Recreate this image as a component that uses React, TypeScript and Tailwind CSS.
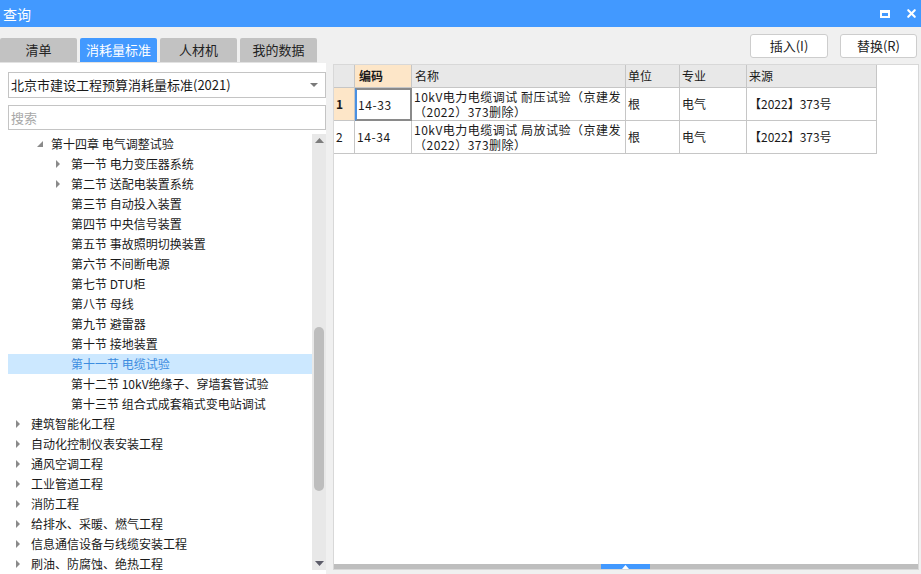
import { X } from "lucide-react";

const tabs = ["清单", "消耗量标准", "人材机", "我的数据"];

type Node = { label: string; level: number; arrow?: "open" | "closed"; active?: boolean };

const tree: Node[] = [
  { label: "第十四章 电气调整试验", level: 1, arrow: "open" },
  { label: "第一节 电力变压器系统", level: 2, arrow: "closed" },
  { label: "第二节 送配电装置系统", level: 2, arrow: "closed" },
  { label: "第三节 自动投入装置", level: 2 },
  { label: "第四节 中央信号装置", level: 2 },
  { label: "第五节 事故照明切换装置", level: 2 },
  { label: "第六节 不间断电源", level: 2 },
  { label: "第七节 DTU柜", level: 2 },
  { label: "第八节 母线", level: 2 },
  { label: "第九节 避雷器", level: 2 },
  { label: "第十节 接地装置", level: 2 },
  { label: "第十一节 电缆试验", level: 2, active: true },
  { label: "第十二节 10kV绝缘子、穿墙套管试验", level: 2 },
  { label: "第十三节 组合式成套箱式变电站调试", level: 2 },
  { label: "建筑智能化工程", level: 0, arrow: "closed" },
  { label: "自动化控制仪表安装工程", level: 0, arrow: "closed" },
  { label: "通风空调工程", level: 0, arrow: "closed" },
  { label: "工业管道工程", level: 0, arrow: "closed" },
  { label: "消防工程", level: 0, arrow: "closed" },
  { label: "给排水、采暖、燃气工程", level: 0, arrow: "closed" },
  { label: "信息通信设备与线缆安装工程", level: 0, arrow: "closed" },
  { label: "刷油、防腐蚀、绝热工程", level: 0, arrow: "closed" },
];

const rows = [
  { no: "1", code: "14-33", name: "10kV电力电缆调试 耐压试验（京建发（2022）373删除）", unit: "根", major: "电气", src: "【2022】373号" },
  { no: "2", code: "14-34", name: "10kV电力电缆调试 局放试验（京建发（2022）373删除）", unit: "根", major: "电气", src: "【2022】373号" },
];

const indent = ["pl-[4px]", "pl-[24px]", "pl-[44px]"];

function TreeArrow({ kind }: { kind?: "open" | "closed" }) {
  return (
    <span className="w-[19px] h-full flex items-center shrink-0">
      {kind === "closed" && (
        <svg width="10" height="10" viewBox="0 0 10 10" className="ml-[1px]">
          <path d="M3 1 L7 5 L3 9 Z" fill="#8a8a8a" />
        </svg>
      )}
      {kind === "open" && (
        <svg width="10" height="10" viewBox="0 0 10 10" className="ml-[3px]">
          <path d="M8 2 L8 8 L2 8 Z" fill="#8a8a8a" />
        </svg>
      )}
    </span>
  );
}

export default function App() {
  return (
    <div
      className="w-[921px] h-[574px] bg-[#f0f0f0] flex flex-col overflow-hidden text-[#1a1a1a]"
      style={{ fontFamily: '"Noto Sans CJK SC", "Microsoft YaHei", sans-serif' }}
    >
      {/* title bar */}
      <div className="h-[27px] bg-[#4299ff] flex items-center justify-between pl-[3px] pr-[3px] text-white shrink-0">
        <span className="text-[14px] leading-none">查询</span>
        <div className="flex items-center gap-[15px]">
          <span className="w-[10px] h-[8px] border-2 border-white border-t-[3px]" />
          <X className="w-[13px] h-[13px]" strokeWidth={4} />
        </div>
      </div>

      {/* tab row */}
      <div className="h-[36px] flex justify-between shrink-0">
        <div className="flex items-end gap-[3px] border-b border-[#e2e2e2]">
          {tabs.map((t, i) => (
            <div
              key={t}
              className={
                i === 1
                  ? "w-[77px] h-[24px] rounded-t-[2px] bg-[#4299ff] text-white text-[13px] flex items-center justify-center"
                  : "w-[77px] h-[24px] rounded-t-[2px] bg-[#c2c2c2] text-[#222] text-[13px] flex items-center justify-center"
              }
            >
              {t}
            </div>
          ))}
        </div>
        <div className="flex items-start gap-[12px] pt-[7px] pr-[4px]">
          <button className="w-[78px] h-[24px] bg-white border border-[#cdcdcd] rounded-[3px] text-[13px] text-[#222]">
            插入(I)
          </button>
          <button className="w-[77px] h-[24px] bg-white border border-[#cdcdcd] rounded-[3px] text-[13px] text-[#222]">
            替换(R)
          </button>
        </div>
      </div>

      {/* main */}
      <div className="flex-1 flex min-h-0">
        {/* left panel */}
        <div className="w-[326px] bg-white flex flex-col pb-[4px]">
          <div className="ml-[8px] mt-[9px] h-[26px] border border-[#c4c4c4] bg-white flex items-center justify-between pl-[2px] pr-[7px]">
            <span className="text-[13px] text-[#1a1a1a]">北京市建设工程预算消耗量标准(2021)</span>
            <svg width="8" height="5" viewBox="0 0 8 5">
              <path d="M0 0 L8 0 L4 4 Z" fill="#7a7a7a" />
            </svg>
          </div>
          <div className="ml-[8px] mt-[7px] h-[25px] border border-[#c4c4c4] bg-white flex items-center pl-[2px]">
            <span className="text-[13px] text-[#a8a8a8]">搜索</span>
          </div>
          <div className="flex-1 flex mt-[4px] min-h-0">
            <div className="ml-[8px] w-[304px] overflow-hidden">
              {tree.map((n) => (
                <div
                  key={n.label}
                  className={
                    (n.active ? "bg-[#cce8ff] text-[#3d8de0] " : "text-[#1a1a1a] ") +
                    "h-[20px] flex items-center text-[12px] whitespace-nowrap " +
                    indent[n.level]
                  }
                >
                  <TreeArrow kind={n.arrow} />
                  <span>{n.label}</span>
                </div>
              ))}
            </div>
            <div className="w-[14px] bg-[#e8e8e8] flex flex-col items-center justify-between py-[4px]">
              <svg width="9" height="5" viewBox="0 0 9 5">
                <path d="M0 5 L9 5 L4.5 0 Z" fill="#7d7d7d" />
              </svg>
              <div className="flex-1 w-full flex flex-col pt-[184px] pb-[70px]">
                <div className="mx-auto w-[10px] flex-1 rounded-full bg-[#bdbdbd]" />
              </div>
              <svg width="9" height="5" viewBox="0 0 9 5">
                <path d="M0 0 L9 0 L4.5 5 Z" fill="#5d5d6a" />
              </svg>
            </div>
          </div>
        </div>

        {/* right panel */}
        <div className="ml-[7px] mt-[1px] mb-[4px] w-[586px] bg-white border border-[#d8d8d8] flex flex-col">
          <div className="flex-1 min-h-0">
            <div className="flex h-[23px] text-[12px]">
              <div className="w-[21px] bg-[#e8e8e8] border-r border-b border-[#c6c6c6]" />
              <div className="w-[57px] bg-[#fde6c8] border-r border-b border-[#c6c6c6] flex items-center pl-[4px] font-bold">
                编码
              </div>
              <div className="w-[214px] bg-[#e8e8e8] border-r border-b border-[#c6c6c6] flex items-center pl-[3px]">
                名称
              </div>
              <div className="w-[54px] bg-[#e8e8e8] border-r border-b border-[#c6c6c6] flex items-center pl-[2px]">
                单位
              </div>
              <div className="w-[67px] bg-[#e8e8e8] border-r border-b border-[#c6c6c6] flex items-center pl-[2px]">
                专业
              </div>
              <div className="w-[130px] bg-[#e8e8e8] border-r border-b border-[#c6c6c6] flex items-center pl-[2px]">
                来源
              </div>
            </div>
            {rows.map((r, i) => (
              <div key={r.no} className="flex h-[33px] text-[12px]">
                <div
                  className={
                    i === 0
                      ? "w-[21px] bg-[#fde6c8] border-r border-b border-[#c6c6c6] flex items-center pl-[2px] font-bold"
                      : "w-[21px] border-r border-b border-[#c6c6c6] flex items-center pl-[2px]"
                  }
                >
                  {r.no}
                </div>
                <div
                  className={
                    i === 0
                      ? "w-[57px] border-2 border-[#8a8a8a] border-l-[#4a90e2] flex items-center pl-[1px] tracking-[0.6px]"
                      : "w-[57px] border-r border-b border-[#c6c6c6] flex items-center pl-[2px] tracking-[0.6px]"
                  }
                >
                  {r.code}
                </div>
                <div className="w-[214px] border-r border-b border-[#c6c6c6] flex items-center pl-[2px] leading-[15px] tracking-[0.5px]">
                  {r.name}
                </div>
                <div className="w-[54px] border-r border-b border-[#c6c6c6] flex items-center pl-[2px]">
                  {r.unit}
                </div>
                <div className="w-[67px] border-r border-b border-[#c6c6c6] flex items-center pl-[2px]">
                  {r.major}
                </div>
                <div className="w-[130px] border-r border-b border-[#c6c6c6] flex items-center pl-[2px]">
                  {r.src}
                </div>
              </div>
            ))}
          </div>
          <div className="h-[5px] bg-[#bebebe] flex pl-[267px]">
            <div className="w-[49px] h-full bg-[#4299ff] flex items-center justify-center">
              <svg width="7" height="4" viewBox="0 0 7 4">
                <path d="M0 4 L7 4 L3.5 0 Z" fill="#fff" />
              </svg>
            </div>
          </div>
        </div>
      </div>
    </div>
  );
}
